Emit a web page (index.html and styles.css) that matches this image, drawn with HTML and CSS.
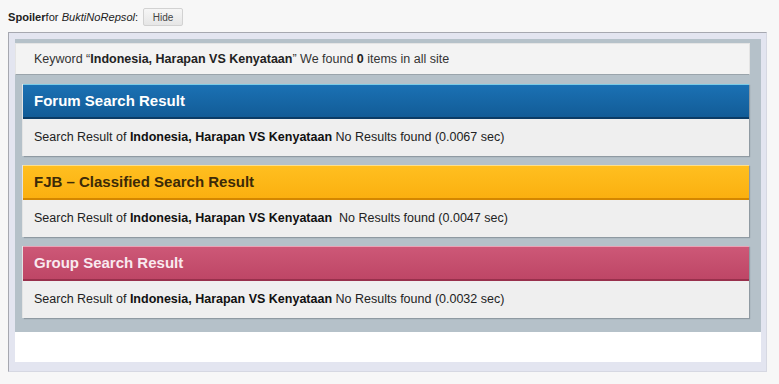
FILE: index.html
```html
<!DOCTYPE html>
<html>
<head>
<meta charset="utf-8">
<link rel="stylesheet" href="styles.css">
</head>
<body>
<div class="spoiler-head">
  <span class="sp-label"><b>Spoiler</b>for <i>BuktiNoRepsol</i>:</span>
  <button class="hide-btn">Hide</button>
</div>
<div class="outer">
  <div class="grey">
    <div class="keyword">Keyword “<b>Indonesia, Harapan VS Kenyataan</b>” We found <b>0</b> items in all site</div>
    <div class="result forum">
      <div class="r-head">Forum Search Result</div>
      <div class="r-body">Search Result of <b>Indonesia, Harapan VS Kenyataan</b> No Results found (0.0067 sec)</div>
    </div>
    <div class="result fjb">
      <div class="r-head">FJB – Classified Search Result</div>
      <div class="r-body">Search Result of <b>Indonesia, Harapan VS Kenyataan</b>&nbsp; No Results found (0.0047 sec)</div>
    </div>
    <div class="result group">
      <div class="r-head">Group Search Result</div>
      <div class="r-body">Search Result of <b>Indonesia, Harapan VS Kenyataan</b> No Results found (0.0032 sec)</div>
    </div>
  </div>
  <div class="white"></div>
</div>
</body>
</html>
```
FILE: styles.css
```css
html, body {
  margin: 0;
  padding: 0;
  background: #f7f7f7;
  font-family: "Liberation Sans", Arial, sans-serif;
  color: #222;
}
.spoiler-head {
  display: flex;
  align-items: center;
  height: 18px;
  padding: 8px 0 0 8px;
  font-size: 11.1px;
  color: #222;
}
.sp-label b { font-weight: bold; }
.sp-label i { font-style: italic; }
.hide-btn {
  margin-left: 5px;
  width: 40px;
  height: 18px;
  padding: 0;
  font-family: "Liberation Sans", Arial, sans-serif;
  font-size: 10px;
  color: #444;
  background: linear-gradient(#f6f6f6, #e6e6e6);
  border: 1px solid #d2d2d2;
  border-radius: 2px;
}
.outer {
  margin: 6px 0 0 8px;
  width: 746px;
  border-top: 1px solid #a6a8b0;
  border-left: 1px solid #a6a8b0;
  border-right: 1px solid #d6d8e2;
  border-bottom: 1px solid #d6d8e2;
  background: #e3e5f0;
  padding: 6px 5px 9px 6px;
}
.grey {
  background: #b5c1c9;
  padding: 4px 11px 14px 0;
  display: flex;
  flex-direction: column;
}
.keyword {
  height: 30px;
  line-height: 30px;
  background: #f3f3f3;
  border: 1px solid #e4e4e4;
  border-bottom-color: #9aa4ab;
  padding-left: 18px;
  font-size: 12.5px;
  color: #333;
}
.keyword b { color: #222; }
.result {
  margin: 9px 1px 0 8px;
  background: #efefef;
  box-shadow: 1px 1px 1px #8f9aa2, -1px 0 0 #e4e4e4;
}
.r-head {
  height: 32px;
  line-height: 32px;
  padding-left: 11px;
  font-size: 15px;
  font-weight: bold;
}
.r-body {
  height: 37px;
  line-height: 37px;
  padding-left: 11px;
  font-size: 12.5px;
  color: #222;
}
.r-body b { color: #111; }
.forum .r-head {
  background: linear-gradient(#1b71b4, #125c97);
  border-top: 1px solid #7ccbe6;
  border-bottom: 2px solid #0b3c66;
  color: #fff;
}
.fjb .r-head {
  background: linear-gradient(#ffbf20, #fbb010);
  border-top: 1px solid #ffe08a;
  border-bottom: 2px solid #d48700;
  color: #3c2a08;
}
.group .r-head {
  background: linear-gradient(#cd5877, #be4666);
  border-top: 1px solid #eaa3b6;
  border-bottom: 2px solid #98304c;
  color: #f9e9ef;
}
.white {
  height: 30px;
  background: #ffffff;
}
```
